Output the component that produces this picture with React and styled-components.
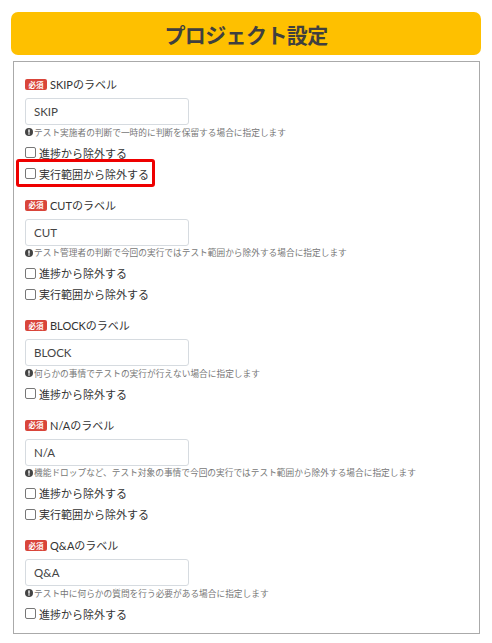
import React from 'react'
import styled, { createGlobalStyle } from 'styled-components'

const GlobalStyle = createGlobalStyle`
  body {
    margin: 0;
    background: #fff;
    font-family: Lato, 'Noto Sans CJK JP', sans-serif;
    color: #333;
  }
`

const sections = [
  {
    name: 'SKIP',
    help: 'テスト実施者の判断で一時的に判断を保留する場合に指定します',
    options: ['進捗から除外する', '実行範囲から除外する'],
    marked: 1,
  },
  {
    name: 'CUT',
    help: 'テスト管理者の判断で今回の実行ではテスト範囲から除外する場合に指定します',
    options: ['進捗から除外する', '実行範囲から除外する'],
  },
  {
    name: 'BLOCK',
    help: '何らかの事情でテストの実行が行えない場合に指定します',
    options: ['進捗から除外する'],
  },
  {
    name: 'N/A',
    help: '機能ドロップなど、テスト対象の事情で今回の実行ではテスト範囲から除外する場合に指定します',
    options: ['進捗から除外する', '実行範囲から除外する'],
  },
  {
    name: 'Q&A',
    help: 'テスト中に何らかの質問を行う必要がある場合に指定します',
    options: ['進捗から除外する'],
  },
]

const InfoIcon = () => (
  <svg width='8' height='8' viewBox='0 0 8 8'>
    <circle cx='4' cy='4' r='4' fill='#444' />
    <rect x='3.3' y='1.4' width='1.4' height='3.3' fill='#fff' />
    <rect x='3.3' y='5.3' width='1.4' height='1.3' fill='#fff' />
  </svg>
)

const App = () => (
  <Page>
    <GlobalStyle />
    <Header>プロジェクト設定</Header>
    <Panel>
      {sections.map(s => (
        <Section key={s.name}>
          <LabelRow>
            <Badge>必須</Badge>
            {s.name}のラベル
          </LabelRow>
          <TextInput defaultValue={s.name} />
          <Help>
            <InfoIcon />
            {s.help}
          </Help>
          <Options>
            {s.options.map((o, i) => (
              <CheckRow key={o}>
                <Check type='checkbox' />
                {o}
                {s.marked === i && <Highlight />}
              </CheckRow>
            ))}
          </Options>
        </Section>
      ))}
    </Panel>
  </Page>
)

export default App

const Page = styled.div`
  padding: 12px 11px 10px 11px;
  width: 492px;
  box-sizing: border-box;
`

const Header = styled.h1`
  margin: 0;
  height: 43px;
  display: flex;
  align-items: center;
  justify-content: center;
  background: #fec000;
  border-radius: 7px;
  font-family: 'Noto Sans CJK JP', sans-serif;
  font-size: 21px;
  font-weight: 700;
  color: #3f3f3f;
  letter-spacing: -0.6px;
`

const Panel = styled.div`
  margin: 6px 1px 0 2px;
  border: 1px solid #aaa;
  padding: 13px 11px 9px 11px;
  display: flex;
  flex-direction: column;
  gap: 11.5px;
`

const Section = styled.div`
  display: flex;
  flex-direction: column;
`

const LabelRow = styled.div`
  height: 18px;
  display: flex;
  align-items: center;
  gap: 3px;
  font-size: 11px;
  color: #333;
  margin-bottom: 5px;
`

const Badge = styled.span`
  width: 22px;
  height: 11px;
  margin-top: 1px;
  border-radius: 2px;
  background: #d9453a;
  color: #fff;
  font-size: 7.5px;
  font-weight: 700;
  font-family: 'Noto Sans CJK JP', sans-serif;
  display: flex;
  align-items: center;
  justify-content: center;
  line-height: 1;
`

const TextInput = styled.input`
  width: 164px;
  height: 27px;
  box-sizing: border-box;
  border: 1px solid #d6dbe0;
  border-radius: 3px;
  padding: 0 8px;
  font-family: Lato, 'Noto Sans CJK JP', sans-serif;
  font-size: 11.5px;
  color: #444;
  outline: none;
`

const Help = styled.div`
  height: 14px;
  display: flex;
  align-items: center;
  gap: 1px;
  font-size: 8.7px;
  color: #777;
  white-space: nowrap;
  margin-bottom: 3px;
  svg {
    flex-shrink: 0;
  }
`

const Options = styled.div`
  display: flex;
  flex-direction: column;
`

const CheckRow = styled.label`
  position: relative;
  height: 21px;
  display: flex;
  align-items: center;
  gap: 3px;
  font-size: 11px;
  color: #333;
`

const Check = styled.input`
  appearance: none;
  margin: 0;
  width: 11px;
  height: 11px;
  border: 1px solid #777;
  border-radius: 2px;
  background: #fff;
`

const Highlight = styled.span`
  position: absolute;
  left: -9px;
  top: -4px;
  width: 139px;
  height: 28px;
  box-sizing: border-box;
  border: 3px solid #ee0000;
  border-radius: 3px;
  pointer-events: none;
`
